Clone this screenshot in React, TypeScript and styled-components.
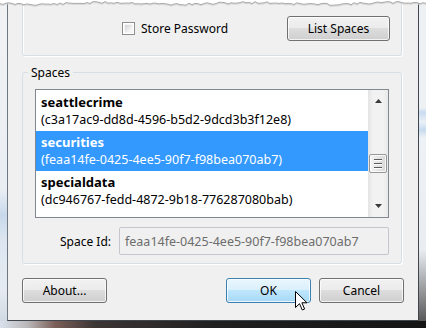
import React from "react";
import styled, { createGlobalStyle } from "styled-components";

const GlobalStyle = createGlobalStyle`
  html, body {
    margin: 0;
    padding: 0;
    background: #fff;
  }
  body {
    font-family: "Noto Sans", "Open Sans", sans-serif;
    color: #000;
  }
`;

// Window frame around the dialog
const Screen = styled.div`
  position: relative;
  width: 426px;
  height: 328px;
  overflow: hidden;
  box-sizing: border-box;
  padding: 0 7px 7px 7px;
  background:
    linear-gradient(to right, #d9e2ec 0px, #b9b6b8 28px, #7b5e58 55px, #3b3534 95px, #1f1f1f 220px, #141414 100%) left bottom / 100% 7px no-repeat,
    linear-gradient(to bottom, #eef1f4 0px, #eef1f4 108px, #c9dbf0 112px, #eaf0f6 122px, #c7daef 130px, #eef2f6 138px, #e9edf2 250px, #4a4a4a 100%) right top / 7px 100% no-repeat,
    linear-gradient(to bottom, #f1f2f4 0px, #e9eef3 190px, #c8d9ec 215px, #dce6f1 240px, #e6ebf1 290px, #cbd5df 100%) left top / 7px 100% no-repeat,
    #eef1f4;
`;

const TornEdge = styled.svg`
  position: absolute;
  left: 0;
  top: 0;
`;

const Cursor = styled.svg`
  position: absolute;
  left: 295px;
  top: 291px;
`;

const Client = styled.div`
  box-sizing: border-box;
  height: 321px;
  display: flex;
  flex-direction: column;
  padding: 0 14px 17px 14px;
  background: #f0f0f0;
  border: 1px solid #3f464e;
  border-top: none;
  border-left-color: #6f7780;
`;

// Top group (cut off by the screenshot)
const TopGroup = styled.div`
  display: flex;
  align-items: center;
  justify-content: space-between;
  margin-right: 2px;
  padding: 16px 11px 14px 99px;
  border: 1px solid #d5dfe5;
  border-top: none;
  border-radius: 0 0 3px 3px;
  box-shadow: inset 1px 0 0 #fff, 1px 1px 0 #fff;
`;

const CheckLabel = styled.label`
  display: flex;
  align-items: center;
  gap: 6px;
  font-size: 12px;
  line-height: 15px;
`;

const CheckBox = styled.span`
  box-sizing: border-box;
  width: 13px;
  height: 13px;
  padding: 2px;
  border: 1px solid #8e8f8f;
  background: linear-gradient(135deg, #cfd2d6 0%, #eeeeee 60%, #fbfbfb 100%) content-box, #f6f6f6;
  box-shadow: inset 0 0 0 1px #fff;
`;

const Button = styled.button<{ $hot?: boolean; $width?: number }>`
  box-sizing: border-box;
  width: ${({ $width }) => $width ?? 85}px;
  height: 25px;
  padding: 0;
  font-family: "Noto Sans", "Open Sans", sans-serif;
  font-size: 12px;
  color: #000;
  border: 1px solid ${({ $hot }) => ($hot ? "#3c7fb1" : "#707070")};
  border-radius: 3px;
  background: ${({ $hot }) =>
    $hot
      ? "linear-gradient(#eaf6fd 0%, #d9f0fc 50%, #bee6fd 50%, #a7d9f5 100%)"
      : "linear-gradient(#f2f2f2 0%, #ebebeb 50%, #dddddd 50%, #cfcfcf 100%)"};
  box-shadow: inset 0 0 0 1px rgba(255, 255, 255, 0.75);
`;

// Spaces group
const Group = styled.fieldset`
  margin: 9px 2px 0 0;
  padding: 9px 12px 8px 12px;
  min-width: 0;
  border: 1px solid #d5dfe5;
  border-radius: 3px;
  box-shadow: 1px 1px 0 #fff;
`;

const Legend = styled.legend`
  margin-left: -7px;
  padding: 0 3px;
  font-size: 12px;
  line-height: 15px;
`;

const ListBox = styled.div`
  box-sizing: border-box;
  display: flex;
  height: 129px;
  border: 1px solid #828790;
  background: #fff;
`;

const Items = styled.ul`
  flex: 1;
  margin: 0;
  padding: 1px 0 0;
  list-style: none;
  overflow: hidden;
`;

const Item = styled.li<{ $selected?: boolean }>`
  box-sizing: border-box;
  height: 40px;
  padding: 3px 5px;
  font-size: 12.5px;
  line-height: 17px;
  white-space: nowrap;
  background: ${({ $selected }) => ($selected ? "#3399ff" : "transparent")};
  color: ${({ $selected }) => ($selected ? "#fff" : "#000")};
`;

const ItemName = styled.div`
  font-size: 13px;
  font-weight: 700;
`;

const ItemId = styled.div``;

const ScrollBar = styled.div`
  width: 20px;
  display: flex;
  flex-direction: column;
  background: linear-gradient(to right, #e4e4e4 0%, #f2f2f2 25%, #f2f2f2 75%, #e9e9e9 100%);
`;

const ScrollArrow = styled.div`
  height: 22px;
  display: flex;
  align-items: center;
  justify-content: center;
`;

const ScrollTrack = styled.div`
  flex: 1;
`;

const Thumb = styled.div`
  box-sizing: border-box;
  height: 19px;
  margin: 42px 1px 0 1px;
  display: flex;
  flex-direction: column;
  align-items: center;
  justify-content: center;
  gap: 3px;
  border: 1px solid #979797;
  border-radius: 2px;
  background: linear-gradient(to right, #f5f5f5 0%, #e6e6e6 50%, #d8d8d8 100%);
  box-shadow: inset 0 0 0 1px rgba(255, 255, 255, 0.8);
`;

const Grip = styled.span`
  width: 8px;
  height: 1px;
  background: #5c5c5c;
  box-shadow: 0 1px 0 #fff;
`;

const IdRow = styled.div`
  display: flex;
  align-items: center;
  justify-content: flex-end;
  gap: 8px;
  margin-top: 9px;
`;

const IdLabel = styled.label`
  font-size: 12px;
`;

const IdField = styled.div`
  box-sizing: border-box;
  width: 270px;
  height: 28px;
  display: flex;
  align-items: center;
  padding: 0 5px;
  border: 1px solid #c3c6cb;
  border-radius: 2px;
  background: #f0f0f0;
  color: #6d6d6d;
  font-size: 12.5px;
`;

const ButtonRow = styled.div`
  display: flex;
  gap: 8px;
  margin-top: 14px;
  & > :nth-child(2) {
    margin-left: auto;
  }
`;

const spaces = [
  { name: "seattlecrime", id: "c3a17ac9-dd8d-4596-b5d2-9dcd3b3f12e8" },
  { name: "securities", id: "feaa14fe-0425-4ee5-90f7-f98bea070ab7" },
  { name: "specialdata", id: "dc946767-fedd-4872-9b18-776287080bab" },
];

const tornPoints = (() => {
  let s = 11;
  const pts: string[] = [];
  for (let x = 0; x <= 426; x += 3) {
    s = (s * 9301 + 49297) % 233280;
    const r = s / 233280;
    const wave = Math.sin(x / 23) * 0.9;
    pts.push(`${x},${(3.4 + wave + (r - 0.5) * 2.2).toFixed(1)}`);
  }
  return pts.join(" ");
})();

const Arrow = ({ down }: { down?: boolean }) => (
  <svg width="7" height="4" viewBox="0 0 7 4">
    <path d={down ? "M0 0 L7 0 L3.5 4 Z" : "M0 4 L3.5 0 L7 4 Z"} fill="#3a3a3a" />
  </svg>
);

const App = () => {
  const selected = 1;
  return (
    <>
      <GlobalStyle />
      <Screen>
        <Client>
          <TopGroup>
            <CheckLabel>
              <CheckBox />
              Store Password
            </CheckLabel>
            <Button $width={103}>List Spaces</Button>
          </TopGroup>

          <Group>
            <Legend>Spaces</Legend>
            <ListBox>
              <Items>
                {spaces.map((s, i) => (
                  <Item key={s.id} $selected={i === selected}>
                    <ItemName>{s.name}</ItemName>
                    <ItemId>({s.id})</ItemId>
                  </Item>
                ))}
              </Items>
              <ScrollBar>
                <ScrollArrow>
                  <Arrow />
                </ScrollArrow>
                <ScrollTrack>
                  <Thumb>
                    <Grip />
                    <Grip />
                    <Grip />
                  </Thumb>
                </ScrollTrack>
                <ScrollArrow>
                  <Arrow down />
                </ScrollArrow>
              </ScrollBar>
            </ListBox>
            <IdRow>
              <IdLabel>Space Id:</IdLabel>
              <IdField>{spaces[selected].id}</IdField>
            </IdRow>
          </Group>

          <ButtonRow>
            <Button>About...</Button>
            <Button $hot>OK</Button>
            <Button>Cancel</Button>
          </ButtonRow>
        </Client>

        <TornEdge width="426" height="9" viewBox="0 0 426 9">
          <polygon points={`0,0 ${tornPoints} 426,0`} fill="#fff" />
          <polyline points={tornPoints} fill="none" stroke="#d6d6d6" strokeWidth="1" transform="translate(0 1)" />
          <polyline points={tornPoints} fill="none" stroke="#a9a9a9" strokeWidth="1" />
        </TornEdge>

        <Cursor width="14" height="21" viewBox="0 0 14 21">
          <path
            d="M0.5 0.5 L0.5 16.5 L4.5 12.7 L7.3 19 L9.6 18 L6.9 11.8 L12 11.8 Z"
            fill="#fff"
            stroke="#000"
            strokeWidth="1"
            strokeLinejoin="miter"
          />
        </Cursor>
      </Screen>
    </>
  );
};

export default App;
